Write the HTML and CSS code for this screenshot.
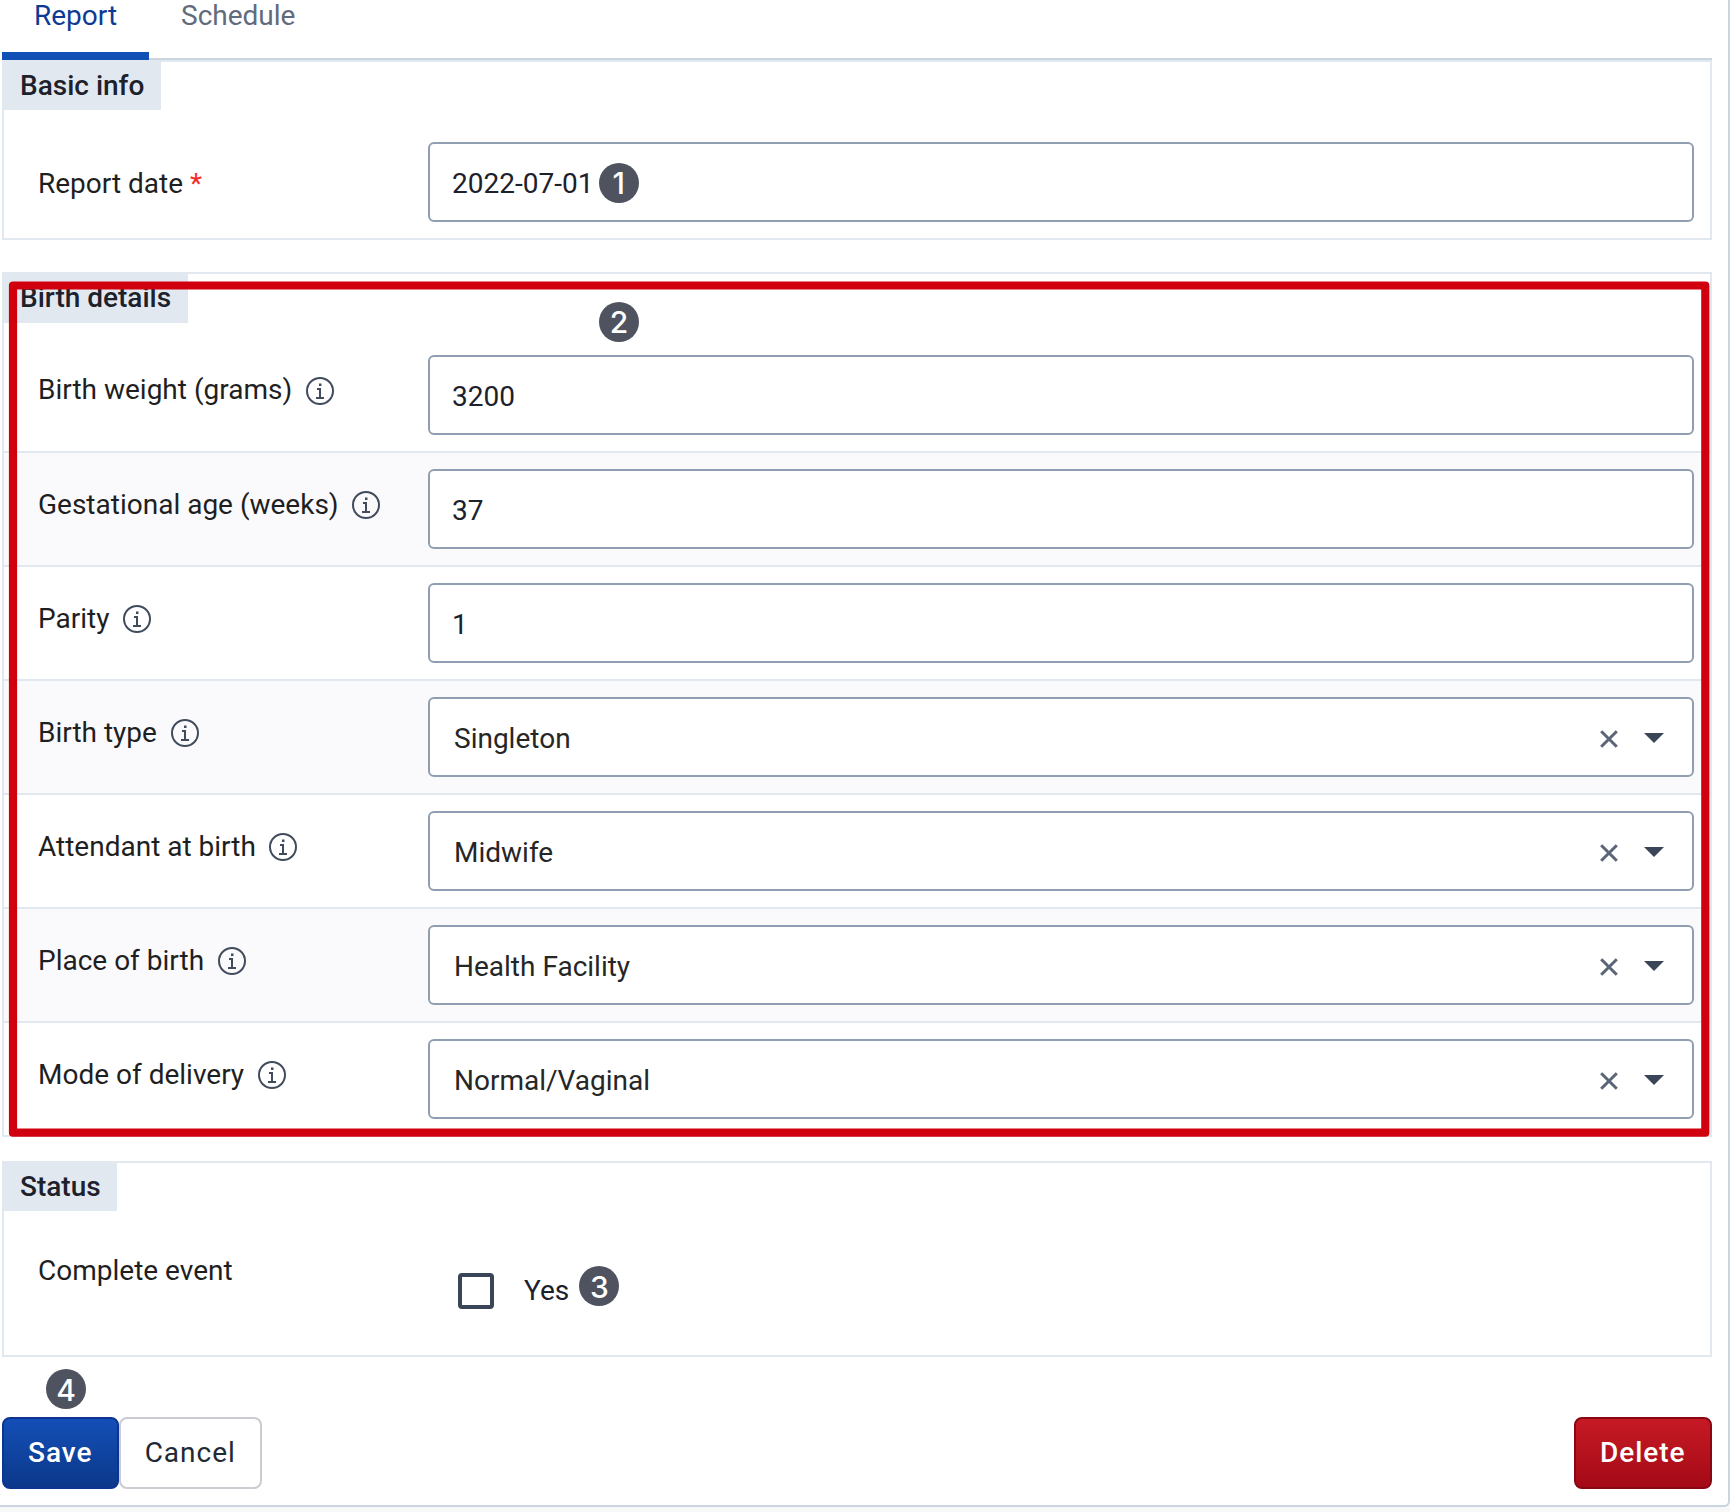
FILE: index.html
```html
<!DOCTYPE html>
<html lang="en">
<head>
<meta charset="utf-8">
<title>Birth report</title>
<link rel="stylesheet" href="styles.css">
</head>
<body>
<svg class="defs" width="0" height="0">
  <symbol id="info" viewBox="0 0 32 32"><circle cx="16" cy="16" r="13" fill="none" stroke="currentColor" stroke-width="2"/><path d="M15 8.500h2.500v2.500H15zM13 13h4v9h3v2h-8v-2h3v-7h-2z" fill="currentColor"/></symbol>
  <symbol id="clear" viewBox="0 0 18 18"><path d="M1.200 1.200l15.600 15.600M16.800 1.200l-15.600 15.600" fill="none" stroke="currentColor" stroke-width="3"/></symbol>
  <symbol id="caret" viewBox="0 0 20 10"><path d="M0 0h20L10 10z" fill="currentColor"/></symbol>
</svg>
<main class="panel">
  <nav class="tabs"><a class="tab active">Report</a><a class="tab">Schedule</a></nav>
  <section class="section">
    <h2 class="title">Basic info</h2>
    <div class="row basic"><label class="label">Report date <span class="required">*</span></label><div class="field">2022-07-01</div></div>
  </section>
  <section class="section details">
    <h2 class="title">Birth details</h2>
    <div class="row"><label class="label">Birth weight (grams)<svg class="info"><use href="#info"/></svg></label><div class="field">3200</div></div>
    <div class="row"><label class="label">Gestational age (weeks)<svg class="info"><use href="#info"/></svg></label><div class="field">37</div></div>
    <div class="row"><label class="label">Parity<svg class="info"><use href="#info"/></svg></label><div class="field">1</div></div>
    <div class="row"><label class="label">Birth type<svg class="info"><use href="#info"/></svg></label><div class="field select"><span class="value">Singleton</span><svg class="clear"><use href="#clear"/></svg><svg class="caret"><use href="#caret"/></svg></div></div>
    <div class="row"><label class="label">Attendant at birth<svg class="info"><use href="#info"/></svg></label><div class="field select"><span class="value">Midwife</span><svg class="clear"><use href="#clear"/></svg><svg class="caret"><use href="#caret"/></svg></div></div>
    <div class="row"><label class="label">Place of birth<svg class="info"><use href="#info"/></svg></label><div class="field select"><span class="value">Health Facility</span><svg class="clear"><use href="#clear"/></svg><svg class="caret"><use href="#caret"/></svg></div></div>
    <div class="row"><label class="label">Mode of delivery<svg class="info"><use href="#info"/></svg></label><div class="field select"><span class="value">Normal/Vaginal</span><svg class="clear"><use href="#clear"/></svg><svg class="caret"><use href="#caret"/></svg></div></div>
  </section>
  <section class="section status">
    <h2 class="title">Status</h2>
    <div class="row complete"><label class="label">Complete event</label><div class="check"><span class="box"></span><span>Yes</span></div></div>
  </section>
  <footer class="actions"><button class="btn save">Save</button><button class="btn cancel">Cancel</button><button class="btn delete">Delete</button></footer>
  <svg class="highlight" width="1702" height="858"><rect x="5" y="5.500" width="1692.300" height="847.200" fill="none" stroke="#d1000f" stroke-width="8.200" stroke-linejoin="round"/></svg>
  <span class="badge one">1</span>
  <span class="badge two">2</span>
  <span class="badge three">3</span>
  <span class="badge four">4</span>
</main>
</body>
</html>
```
FILE: styles.css
```css
* { box-sizing: border-box; }
body { margin: 0; height: 1512px; overflow: hidden; background: #f8f8f8; font: 28px/32px Roboto, sans-serif; color: #1c212b; }
.defs { position: absolute; }
.panel { position: relative; height: 1507px; padding: 0 16px 0 2px; background: #fff; border: solid #cbd5e0; border-width: 0 2px 2px 0; border-bottom-right-radius: 6px; }
.tabs { display: flex; height: 60px; border-bottom: 2px solid #cbd5e0; }
.tab { height: 60px; padding: 0 32px; line-height: 31px; color: #616b7c; }
.tab.active { width: 147px; color: #0d3a95; border-bottom: 8px solid #1151b6; }
.section { border: 2px solid #e2e8f0; }
.title { width: fit-content; height: 48px; margin: 0 0 16px -2px; padding: 0 16.400px 0 18px; background: #e2e8f0; font-size: 28px; font-weight: 500; line-height: 47px; color: #1c212b; }
.row { display: flex; height: 114px; padding: 16px; border-bottom: 2px solid #e2e8f0; }
.row:nth-child(odd) { background: #fafafd; }
.row:last-child { height: 112px; border-bottom: 0; }
.row:nth-child(2) { background: #fff; }
.label { display: flex; flex: none; width: 408px; padding: 20px 0 0 18px; color: #1f1f1f; white-space: pre; }
.row:nth-child(2) .label { padding-top: 19px; }
.row.basic .label { padding-top: 26px; }
.required { color: #f52b2b; }
.info { width: 32px; height: 32px; margin: 0 0 0 11.600px; color: #404b5c; }
.row:nth-child(2) .info { margin-top: 1px; }
.field { display: flex; align-items: center; width: 1266px; height: 80px; padding: 4px 27px 0 22px; border: 2px solid #8f9fb1; border-radius: 6px; background: #fff; flex: none; }
.select { padding-left: 24px; color: #262626; }
.value { flex: 1; }
.clear { width: 18px; height: 18px; color: #5a6577; margin-right: 26px; }
.caret { width: 20px; height: 10px; color: #3a4657; margin: 0 1px 3px 0; }
.details { margin-top: 32px; }
.details .title { height: 49px; }
.status { margin-top: 24px; }
.status .complete { height: 128px; }
.row.complete .label { width: 438px; padding-top: 12px; }
.check { display: flex; align-items: center; gap: 30px; height: 36px; margin-top: 30px; }
.box { width: 36px; height: 36px; border: 4px solid #3a4657; border-radius: 4px; }
.actions { display: flex; margin-top: 60px; height: 72px; }
.btn { height: 72px; border: 2px solid; border-radius: 8px; font: 500 28px/32px Roboto, sans-serif; letter-spacing: 1px; padding: 0 0.500px 0 0; color: #fff; }
.save { width: 117px; border-color: #0c3592; background: linear-gradient(#144fb7, #0b388a); }
.cancel { width: 143px; border-color: #cbcbd2; background: #fff; color: #212934; font-weight: 400; }
.delete { width: 138px; margin-left: auto; border-color: #890712; background: linear-gradient(#c61a25, #a40a16); }
.highlight { position: absolute; left: 8px; top: 280px; }
.badge { position: absolute; width: 40px; height: 40px; border-radius: 50%; background: #4f535f; color: #fff; font: 500 30px/41px Inter, sans-serif; text-align: center; }
.one { left: 598.700px; top: 162.700px; }
.two { left: 599px; top: 302px; }
.three { left: 579.300px; top: 1266px; line-height: 43px; }
.four { left: 46px; top: 1369px; line-height: 43px; }
```
